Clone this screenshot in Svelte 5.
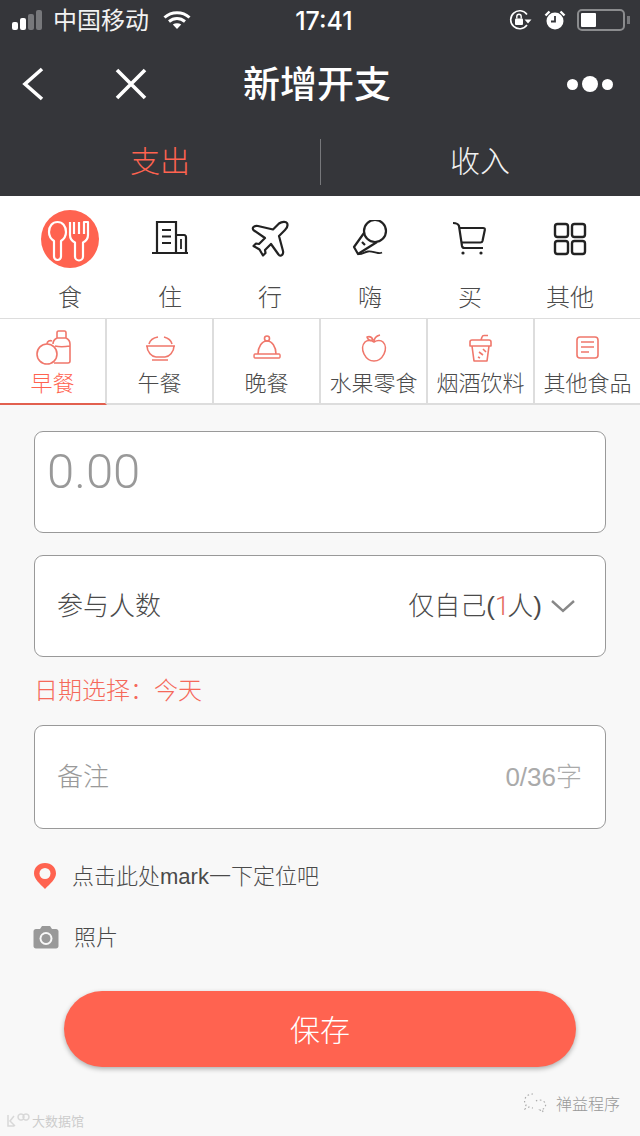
<script>
  const cats = [
    { key: 'food', label: '食', active: true },
    { key: 'home', label: '住' },
    { key: 'plane', label: '行' },
    { key: 'mic', label: '嗨' },
    { key: 'cart', label: '买' },
    { key: 'grid', label: '其他' }
  ];
  const subs = [
    { key: 'milk', label: '早餐', active: true },
    { key: 'bowl', label: '午餐' },
    { key: 'dome', label: '晚餐' },
    { key: 'apple', label: '水果零食' },
    { key: 'cup', label: '烟酒饮料' },
    { key: 'note', label: '其他食品' }
  ];
</script>

<div class="page">
  <header class="dark">
    <div class="status">
      <div class="status-left">
        <span class="signal"><i></i><i></i><i class="off"></i><i class="off"></i></span>
        <span class="carrier">中国移动</span>
        <svg width="28" height="20" viewBox="0 0 28 20" class="wifi">
          <path d="M1.500 7.500C8.500 1 19.500 1 26.500 7.500M6 11.500C10.800 7.500 17.200 7.500 22 11.500" fill="none" stroke="#fff" stroke-width="3"/>
          <path d="M9.800 14.500C12.300 12.700 15.700 12.700 18.200 14.500L14 19Z" fill="#fff"/>
        </svg>
      </div>
      <span class="time">17:41</span>
      <div class="status-right">
        <svg width="26" height="24" viewBox="0 0 26 24">
          <path d="M20 6.500A9 9 0 1 0 20 17" fill="none" stroke="#fff" stroke-width="1.600"/>
          <path d="M17.500 11.500h7l-3.500 4z" fill="#fff"/>
          <rect x="8" y="10.500" width="8" height="6.500" rx="1" fill="#fff"/>
          <path d="M9.800 10.500V8.500a2.200 2.200 0 0 1 4.400 0v2" fill="none" stroke="#fff" stroke-width="1.400"/>
        </svg>
        <svg width="22" height="22" viewBox="0 0 22 22" class="alarm">
          <circle cx="11" cy="12" r="8.500" fill="#fff"/>
          <path d="M11 7v5.500H7" fill="none" stroke="#35363a" stroke-width="1.800"/>
          <path d="M1.500 6.500 5.500 2.500M20.500 6.500 16.500 2.500" stroke="#fff" stroke-width="2.400" fill="none"/>
        </svg>
        <span class="battery"><b></b></span>
        <span class="nub"></span>
      </div>
    </div>

    <div class="nav">
      <div class="nav-left">
        <svg width="24" height="36" viewBox="0 0 24 36">
          <path d="M21 3 4 18l17 15" fill="none" stroke="#fff" stroke-width="3.600"/>
        </svg>
        <svg width="32" height="32" viewBox="0 0 32 32">
          <path d="M2 2l28 28M30 2 2 30" fill="none" stroke="#fff" stroke-width="3.600"/>
        </svg>
      </div>
      <h1>新增开支</h1>
      <div class="dots"><i></i><i class="big"></i><i></i></div>
    </div>

    <div class="tabs">
      <span class="tab on">支出</span>
      <span class="tab">收入</span>
    </div>
  </header>

  <section class="cats">
    {#each cats as c}
      <div class="cat">
        <div class="cat-icon" class:active={c.active}>
          {#if c.key === 'food'}
            <svg width="58" height="58" viewBox="0 0 58 58" fill="none" stroke="#fff" stroke-width="2.200" stroke-linejoin="round">
              <path d="M13 31c-3-2-5-5-5-9 0-6 3.500-10 8.500-10S25 16 25 22c0 4-2 7-5 9v15.500a3.500 3.500 0 0 1-7 0Z"/>
              <path d="M29 12v13c0 4 2 6 5 7.500v14a4 4 0 0 0 8 0v-14c3-1.500 5-3.500 5-7.500V12l-4 0v12M33 12v12M38 12v12"/>
            </svg>
          {:else if c.key === 'home'}
            <svg width="38" height="38" viewBox="0 0 38 38" fill="none" stroke="#222" stroke-width="2.200">
              <path d="M1 33h36M6 33V2h19v31M25 15h8c1.500 0 2 1 2 2.500V33"/>
              <path d="M11 10h9M11 16.500h9M11 23h9M30 19v10" stroke-width="1.800"/>
            </svg>
          {:else if c.key === 'plane'}
            <svg width="38" height="38" viewBox="0 0 38 38" fill="none" stroke="#222" stroke-width="2.200" stroke-linejoin="round">
              <path d="M28 3.500C31 1.500 35 1.500 36 3C37 5 36 8 34 10L28 16L32 31C32.500 33 32 34 31 35C30 36 28.500 36 27.500 34.500L20 24L14 30L14.500 33L12 35.500L8.500 29.500L2.500 26L5 23.500L8 24L14 18L3 10.500C1.500 9.500 1.500 8 2.500 7C3.500 6 5 5.500 7 6L22 9.500Z"/>
            </svg>
          {:else if c.key === 'mic'}
            <svg width="38" height="38" viewBox="0 0 38 38" fill="none" stroke="#222" stroke-width="2.200" stroke-linejoin="round">
              <circle cx="24" cy="11" r="11"/>
              <path d="M13 13 3 27l4 7 19-12M11 22l3 3"/>
              <path d="M7 34c4 1 6-2 10-2.500s6 1 10 1.500c2 .3 3 0 4-.5" stroke-width="1.800"/>
            </svg>
          {:else if c.key === 'cart'}
            <svg width="38" height="38" viewBox="0 0 38 38" fill="none" stroke="#222" stroke-width="2.200">
              <path d="M2 3c3 0 5 .5 6 3l3 20c.3 1.500 1 2 2.500 2H32"/>
              <path d="M8 8h24c1.500 0 2 .8 1.800 2l-2.300 11c-.3 1-.8 1.500-2 1.500H11"/>
              <circle cx="12" cy="33" r="1.600" fill="#222" stroke="none"/>
              <circle cx="30" cy="33" r="1.600" fill="#222" stroke="none"/>
            </svg>
          {:else}
            <svg width="38" height="38" viewBox="0 0 38 38" fill="none" stroke="#222" stroke-width="2.400">
              <rect x="4" y="4" width="13" height="13" rx="2.500"/>
              <rect x="21" y="4" width="13" height="13" rx="2.500"/>
              <rect x="4" y="21" width="13" height="13" rx="2.500"/>
              <rect x="21" y="21" width="13" height="13" rx="2.500"/>
            </svg>
          {/if}
        </div>
        <span class="cat-label">{c.label}</span>
      </div>
    {/each}
  </section>

  <nav class="subs">
    {#each subs as s}
      <div class="sub" class:active={s.active}>
        <svg width="38" height="38" viewBox="0 0 38 38" fill="none" stroke="#f0776b" stroke-width="1.600" stroke-linejoin="round">
          {#if s.key === 'milk'}
            <circle cx="13" cy="25" r="10"/>
            <path d="M13 15c0-3 3-4 5-3M23 9V4c0-1 .5-2 1.500-2h6c1 0 1.500 1 1.500 2v5M23 9h9M23 9c-2 1-4 3-4 6M32 9c2 1 4 3 4 6v17c0 1.500-1 2-2 2H20M21 17c4 1 9 1 15 0"/>
          {:else if s.key === 'bowl'}
            <path d="M5 17h29M6 17c0 6 5 11 9 11h9c4 0 9-5 9-11M11 31h16M8 15a12 9 0 0 1 9-7M23 8a12 9 0 0 1 8 7"/>
          {:else if s.key === 'dome'}
            <circle cx="19" cy="9.500" r="2.500"/>
            <path d="M10 25a9 13 0 0 1 18 0M6.800 25h24.500c1 0 1 4 0 4H6.800c-1 0-1-4 0-4Z"/>
          {:else if s.key === 'apple'}
            <path d="M19 13c-3-2-7-2-9 0-3 3-3 8-1 12 2 4 6 7 10 7s8-3 10-7c2-4 2-9-1-12-2-2-6-2-9 0Z"/>
            <path d="M19 13c0-3 2-6 6-7M12 8c3-1 5 0 6 3-3 1-5 0-6-3Z"/>
          {:else if s.key === 'cup'}
            <path d="M8 13c0-1 .5-2 2-2h17c1.500 0 2 1 2 2v4H8ZM10 17l2 15h13l2-15M19 11l1-3c.3-1 1-1.500 2-1.500h4"/>
            <path d="M17 23l4 3M16 28l2 1M21 20l3 3"/>
          {:else}
            <rect x="8" y="8" width="21" height="21" rx="3"/>
            <path d="M12 13h13M12 18h13M12 23h8"/>
          {/if}
        </svg>
        <span>{s.label}</span>
      </div>
    {/each}
  </nav>

  <main class="form">
    <div class="box amount"><span>0.00</span></div>
    <div class="box people">
      <span>参与人数</span>
      <span class="people-val">
        <span>仅自己(<em>1</em>人)</span>
        <svg width="26" height="16" viewBox="0 0 26 16">
          <path d="M2 3l11 10L24 3" fill="none" stroke="#888" stroke-width="2.400"/>
        </svg>
      </span>
    </div>
    <div class="date">日期选择：今天</div>
    <div class="box memo">
      <span>备注</span>
      <span class="count">0/36字</span>
    </div>

    <div class="row loc">
      <svg width="24" height="28" viewBox="0 0 24 28">
        <path d="M12 1C5.500 1 1 5.500 1 11.500 1 17 7 22 12 27c5-5 11-10 11-15.500C23 5.500 18.500 1 12 1Z" fill="#ff6350"/>
        <circle cx="12" cy="11.500" r="5.500" fill="#f8f8f8"/>
      </svg>
      <span>点击此处mark一下定位吧</span>
    </div>
    <div class="row photo">
      <svg width="26" height="24" viewBox="0 0 26 24">
        <path d="M3 4h4l2-3h8l2 3h4c1.500 0 2.500 1 2.500 2.500V21c0 1.500-1 2.500-2.500 2.500H3c-1.500 0-2.500-1-2.500-2.500V6.500C.5 5 1.500 4 3 4Z" fill="#999"/>
        <circle cx="13" cy="13.500" r="6.500" fill="#f8f8f8"/>
        <circle cx="13" cy="13.500" r="4.500" fill="#999"/>
      </svg>
      <span>照片</span>
    </div>

    <button class="save">保存</button>
  </main>

  <footer class="marks">
    <span class="mark-left">
      <svg width="24" height="16" viewBox="0 0 24 16" fill="none" stroke="#d8d8d8" stroke-width="1.500">
        <path d="M2 2v11h6M8 3 4 8l5 5M12 4a3 3 0 1 1 0 .1M17 4a3 3 0 1 1 0 .1"/>
      </svg>
      大数据馆
    </span>
    <span class="mark-right">
      <svg width="25" height="20" viewBox="0 0 25 20" fill="none" stroke="#aaa" stroke-width="1.200" stroke-dasharray="1.500 2.500">
        <path d="M10 1a8 7 0 0 0-7 11l-1 4 4-2a8 7 0 0 0 4 1"/>
        <path d="M13 8a6 5 0 1 1 4 9l3 2-1-3"/>
      </svg>
      禅益程序
    </span>
  </footer>
</div>

<style>
  :global(body) {
    margin: 0;
    background: #f8f8f8;
  }
  .page {
    width: 640px;
    height: 1136px;
    overflow: hidden;
    background: #f8f8f8;
    font-family: "Liberation Sans", "Noto Sans CJK SC", sans-serif;
    color: #555;
  }
  .dark {
    background: #35363a;
    color: #fff;
    height: 196px;
  }
  .status {
    height: 40px;
    display: grid;
    grid-template-columns: 1fr auto 1fr;
    align-items: center;
    padding: 0 7px 0 12px;
  }
  .status-left {
    display: flex;
    align-items: center;
  }
  .signal {
    display: flex;
    align-items: flex-end;
    gap: 2px;
    width: 34px;
  }
  .signal i {
    width: 6px;
    background: #fff;
    border-radius: 2px;
  }
  .signal i:nth-child(1) { height: 8px; }
  .signal i:nth-child(2) { height: 12px; }
  .signal i:nth-child(3) { height: 16px; }
  .signal i:nth-child(4) { height: 20px; }
  .signal i.off { background: #77787b; }
  .carrier {
    font-size: 24px;
    line-height: 30px;
    margin: 2px 0 0 7px;
    color: #f2f2f2;
  }
  .wifi { margin-left: 14px; }
  .time {
    font-family: "Inter", "Liberation Sans", sans-serif;
    font-size: 25px;
    font-weight: 500;
    margin: 2px 0 0 3px;
  }
  .status-right {
    display: flex;
    align-items: center;
    justify-content: flex-end;
  }
  .alarm { margin-left: 11px; }
  .battery {
    width: 48px;
    height: 22px;
    box-sizing: border-box;
    border: 2px solid #8b8c8e;
    border-radius: 5px;
    margin-left: 11px;
    padding: 2px;
    display: flex;
  }
  .battery b {
    width: 15px;
    background: #fff;
    border-radius: 1px;
  }
  .nub {
    width: 3px;
    height: 8px;
    background: #77787b;
    margin-left: 2px;
    margin-right: 3px;
  }
  .nav {
    height: 88px;
    display: grid;
    grid-template-columns: 1fr auto 1fr;
    align-items: center;
    padding: 0 21px;
  }
  .nav-left {
    display: flex;
    align-items: center;
    gap: 70px;
  }
  h1 {
    margin: 3px 6px 0 0;
    font-size: 37px;
    font-weight: 500;
    line-height: 44px;
  }
  .dots {
    display: flex;
    align-items: center;
    justify-content: flex-end;
    gap: 4px;
    margin-right: 6px;
  }
  .dots i {
    width: 11px;
    height: 11px;
    border-radius: 50%;
    background: #fff;
  }
  .dots i.big {
    width: 16px;
    height: 16px;
  }
  .tabs {
    height: 68px;
    display: grid;
    grid-template-columns: 1fr 1fr;
  }
  .tab {
    font-size: 30px;
    line-height: 68px;
    text-align: center;
    color: #f1f1f1;
    font-weight: 300;
    position: relative;
  }
  .tab.on {
    color: #ff6350;
  }
  .tab.on::after {
    content: "";
    position: absolute;
    right: -1px;
    top: 11px;
    height: 46px;
    width: 1px;
    background: #77787b;
  }
  .cats {
    height: 122px;
    background: #fff;
    display: grid;
    grid-template-columns: 100px 100px 100px 100px 100px 100px;
    padding-left: 20px;
    padding-right: 20px;
    box-sizing: border-box;
  }
  .cat {
    display: flex;
    flex-direction: column;
    align-items: center;
  }
  .cat-icon {
    width: 58px;
    height: 58px;
    margin-top: 14px;
    border-radius: 50%;
    display: flex;
    align-items: center;
    justify-content: center;
  }
  .cat-icon.active {
    background: #ff6350;
  }
  .cat-label {
    font-size: 24px;
    line-height: 30px;
    margin-top: 15px;
    color: #4a4a4a;
    font-weight: 300;
  }
  .subs {
    height: 87px;
    box-sizing: border-box;
    display: grid;
    grid-template-columns: repeat(5, 107px) 105px;
    background: #fff;
    border-top: 1px solid #ddd;
    border-bottom: 2px solid #ddd;
  }
  .sub {
    display: flex;
    flex-direction: column;
    align-items: center;
    border-right: 2px solid #ddd;
    box-sizing: border-box;
    font-size: 22px;
    line-height: 28px;
    color: #4a4a4a;
    font-weight: 300;
    margin-bottom: -2px;
    padding-top: 10px;
  }
  .sub:last-child {
    border-right: 0;
  }
  .sub svg {
    display: block;
  }
  .sub span {
    white-space: nowrap;
    margin-top: 3px;
  }
  .sub.active {
    color: #ff6350;
    border-bottom: 2px solid #e2604f;
  }
  .form {
    padding: 26px 34px 0;
  }
  .box {
    box-sizing: border-box;
    border: 1px solid #999;
    border-radius: 9px;
    background: #fff;
    display: flex;
    align-items: center;
    justify-content: space-between;
    padding: 0 23px 0 22px;
    font-size: 26px;
    font-weight: 300;
    line-height: 32px;
  }
  .amount {
    height: 102px;
    padding: 0 12px;
    align-items: flex-start;
    font-family: "Roboto", "Liberation Sans", sans-serif;
    font-size: 49px;
    color: #999;
    line-height: 80px;
  }
  .people {
    height: 102px;
    margin-top: 22px;
    color: #4a4a4a;
    padding-right: 29px;
  }
  .people-val {
    display: flex;
    align-items: center;
    white-space: pre;
  }
  .people-val em {
    font-family: "Roboto", sans-serif;
    font-style: normal;
    color: #e5695c;
    letter-spacing: -2px;
  }
  .people-val svg {
    margin-left: 8px;
  }
  .date {
    font-size: 24px;
    line-height: 30px;
    color: #f5695a;
    font-weight: 300;
    margin: 19px 0 0 0;
  }
  .memo {
    height: 104px;
    margin-top: 19px;
    color: #999;
  }
  .count {
    font-size: 26px;
    color: #aaa;
  }
  .row {
    display: flex;
    align-items: center;
    font-size: 22px;
    color: #4a4a4a;
    font-weight: 300;
  }
  .row span {
    padding-bottom: 4px;
  }
  .loc {
    margin-top: 33px;
    height: 28px;
    gap: 15px;
    margin-left: -1px;
  }
  .photo {
    margin-top: 35px;
    height: 24px;
    gap: 14px;
    margin-left: -1px;
  }
  .photo span {
    margin-left: 1px;
  }
  .save {
    display: block;
    width: 512px;
    height: 76px;
    margin: 42px 0 0 30px;
    border: 0;
    border-radius: 38px;
    padding: 0 0 2px;
    background: #ff6350;
    color: #fff;
    font-family: inherit;
    font-size: 30px;
    font-weight: 300;
    box-shadow: 0 2px 5px rgba(0, 0, 0, 0.3);
  }
  .marks {
    display: flex;
    justify-content: space-between;
    padding: 0 20px 0 6px;
    margin-top: 30px;
  }
  .mark-left {
    display: flex;
    align-items: center;
    gap: 2px;
    font-size: 13px;
    color: #ccc;
    margin-top: 14px;
  }
  .mark-right {
    display: flex;
    align-items: center;
    gap: 8px;
    font-size: 16px;
    color: #999;
    font-weight: 300;
    margin-top: -6px;
    height: 24px;
  }
</style>
